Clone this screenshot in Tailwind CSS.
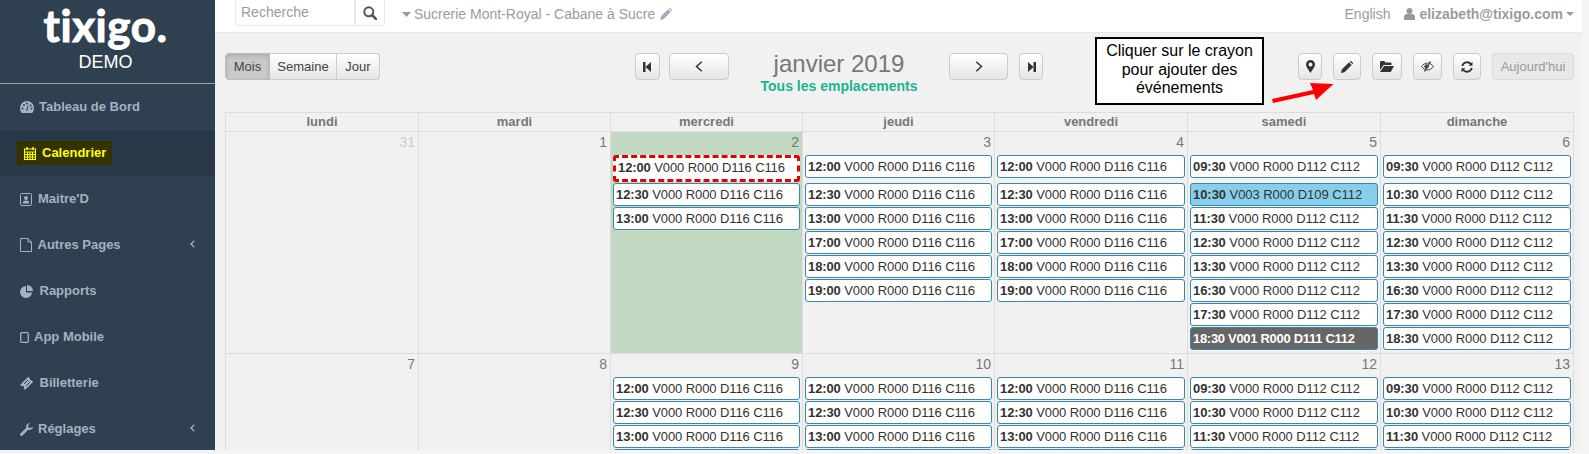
<!DOCTYPE html>
<html lang="fr">
<head>
    <meta charset="UTF-8">
    <title>Calendrier</title>
    <script src="https://cdn.jsdelivr.net/npm/@tailwindcss/browser@4"></script>
</head>
<body class="bg-[#f4f4f4] font-['Liberation_Sans',Arial,sans-serif] overflow-hidden">
<div class="relative w-[1589px] h-[454px] overflow-hidden">
<div class="flex h-[450px]">

    <!-- sidebar -->
    <aside class="w-[215px] shrink-0 bg-[#2f4050] text-[#a7b1c2] text-[13px] font-bold">
        <div class="h-[84px] border-b border-[#9da3a8] flex flex-col items-center pr-[4px]">
            <span class="font-['Lato',sans-serif] font-bold text-white text-[44px] leading-[48px] h-[48px] mt-[1px] mb-[2px] tracking-[0.5px] [-webkit-text-stroke:1px_white]">tixigo.</span>
            <span class="text-white text-[18px] leading-[20px] font-normal mt-[1px]">DEMO</span>
        </div>
        <a class="h-[46px] flex items-center pl-[20px]">
            <svg class="w-[14px] h-[12px] mr-[5px]" viewBox="0 0 14 12"><path fill="#a7b1c2" d="M7 0a7 7 0 0 0-7 7c0 2 .7 3.700 1.800 5h10.400A7 7 0 0 0 14 7a7 7 0 0 0-7-7z"/><g fill="#2f4050"><circle cx="2.500" cy="7.500" r="1"/><circle cx="4" cy="4" r="1"/><circle cx="7" cy="2.600" r="1"/><circle cx="10.500" cy="4.500" r="1"/><circle cx="11.500" cy="7.500" r="1"/><path d="M6 9.500l1.500-5 .8.200-1 5z"/></g></svg>
            <span>Tableau de Bord</span>
        </a>
        <a class="h-[46px] flex items-center bg-[#293846] pl-[17px]">
            <span class="h-[24px] w-[95px] bg-[#333300] text-[#ffff00] flex items-center pl-[7px]">
                <svg class="w-[12px] h-[13px] mr-[6px]" viewBox="0 0 12 13" fill="none" stroke="#ffff00"><rect x=".5" y="2" width="11" height="10.500"/><path d="M.5 5h11M.5 7.500h11M.5 10h11M3.500 5v7.500M6 5v7.500M8.500 5v7.500"/><path stroke-width="1.500" d="M3 0v3M9 0v3"/></svg>
                Calendrier
            </span>
        </a>
        <a class="h-[46px] flex items-center pl-[20px]">
            <svg class="w-[12px] h-[13px] mr-[6px]" viewBox="0 0 12 13"><rect x=".5" y=".5" width="11" height="12" rx="1" fill="none" stroke="#a7b1c2"/><circle cx="6" cy="5" r="2" fill="#a7b1c2"/><path fill="#a7b1c2" d="M2.500 10.500c0-2 1.500-3 3.500-3s3.500 1 3.500 3z"/></svg>
            <span>Maitre'D</span>
        </a>
        <a class="h-[46px] flex items-center pl-[20px] pr-[20px]">
            <svg class="w-[12px] h-[14px] mr-[5.500px]" viewBox="0 0 12 14" fill="none" stroke="#a7b1c2"><path d="M.5.500h7.500l3.500 3.500v9.500h-11zM8 .5v3.500h3.500"/></svg>
            <span>Autres Pages</span>
            <svg class="ml-auto w-[5px] h-[8px] -translate-y-[1px]" viewBox="0 0 5 8" fill="none" stroke="#a7b1c2" stroke-width="1.300"><path d="M4.300.7L1 4l3.300 3.300"/></svg>
        </a>
        <a class="h-[46px] flex items-center pl-[20px]">
            <svg class="w-[13px] h-[13px] mr-[6.500px]" viewBox="0 0 13 13"><path fill="#a7b1c2" d="M6 1a6 6 0 1 0 6 6.500H6z"/><path fill="#a7b1c2" d="M7 0v6h6a6 6 0 0 0-6-6z"/></svg>
            <span>Rapports</span>
        </a>
        <a class="h-[46px] flex items-center pl-[20px]">
            <svg class="w-[9px] h-[11px] mr-[5px]" viewBox="0 0 9 11" fill="none" stroke="#a7b1c2" stroke-width="1.300"><rect x=".7" y=".7" width="7.600" height="9.600" rx="1"/></svg>
            <span>App Mobile</span>
        </a>
        <a class="h-[46px] flex items-center pl-[20px]">
            <svg class="w-[13px] h-[13px] mr-[6.500px]" viewBox="0 0 13 13"><path fill="#a7b1c2" d="M0 8l8-8 2 1.200-.4 1 1.200 1.200 1-.4L13 5l-8 8-1.200-2 .4-1-1.200-1.200-1 .4z"/><path stroke="#2f4050" d="M4 7l4-4M6 9l4-4"/></svg>
            <span>Billetterie</span>
        </a>
        <a class="h-[46px] flex items-center pl-[20px] pr-[20px]">
            <svg class="w-[13px] h-[13px] mr-[5px]" viewBox="0 0 13 13"><path fill="#a7b1c2" d="M13 3.500a3.500 3.500 0 0 1-4.800 3.200L2.500 12.500a1.300 1.300 0 0 1-2-2l5.800-5.700A3.500 3.500 0 0 1 10 .2L8 2.500l.5 2 2 .5z"/></svg>
            <span>Réglages</span>
            <svg class="ml-auto w-[5px] h-[8px] -translate-y-[1px]" viewBox="0 0 5 8" fill="none" stroke="#a7b1c2" stroke-width="1.300"><path d="M4.300.7L1 4l3.300 3.300"/></svg>
        </a>
    </aside>

    <!-- main -->
    <main class="w-[1367px] shrink-0 bg-[#f1f1f1] flex flex-col overflow-hidden">
        <header class="h-[33px] shrink-0 bg-white border-b border-[#e7eaec] flex items-start pl-[20px] pr-[8px] text-[14px] text-[#999c9e]">
            <div class="flex h-[26px] border border-t-0 border-[#e7eaec] rounded-b-[2px]">
                <span class="w-[120px] pl-[5px] leading-[25px] border-r-2 border-[#e7eaec]">Recherche</span>
                <span class="w-[28px] flex items-center justify-center">
                    <svg class="w-[14px] h-[14px]" viewBox="0 0 14 14" fill="none" stroke="#555" stroke-width="2"><circle cx="5.800" cy="5.800" r="4.500"/><path stroke-width="2.500" stroke-linecap="round" d="M9 9l4 4"/></svg>
                </span>
            </div>
            <div class="flex items-center h-[28px] ml-[17px]">
                <svg class="w-[9px] h-[5px] mr-[3px]" viewBox="0 0 9 5"><path fill="#999" d="M0 0h9L4.500 5z"/></svg>
                <span>Sucrerie Mont-Royal - Cabane à Sucre</span>
                <svg class="w-[12px] h-[12px] ml-[5px]" viewBox="0 0 12 12"><path fill="#a3abc0" d="M0 12l.8-3.500L8 1.300 10.700 4 3.500 11.200zM8.800.5l.5-.5h.7L12 2v.7l-.5.5z"/></svg>
            </div>
            <div class="flex items-center h-[28px] ml-auto">
                <span>English</span>
                <svg class="w-[11px] h-[12px] ml-[14px] mr-[4px]" viewBox="0 0 11 12"><circle cx="5.500" cy="3" r="3" fill="#999"/><path fill="#999" d="M0 12V9c0-2 1.500-3 3-3h5c1.500 0 3 1 3 3v3z"/></svg>
                <span class="font-bold">elizabeth@tixigo.com</span>
                <svg class="w-[8px] h-[4px] ml-[3px]" viewBox="0 0 8 4"><path fill="#999" d="M0 0h8L4 4z"/></svg>
            </div>
        </header>

        <div class="h-[79px] shrink-0 pl-[10px] pr-[8px] pt-[20px] flex items-start text-[13px] text-[#444]">
            <div class="flex h-[27px] leading-[25px] text-center">
                <span class="w-[45px] bg-[#c9c9c9] border border-[#bbb] rounded-l-[4px] shadow-[inset_0_2px_4px_rgba(0,0,0,0.15)]">Mois</span>
                <span class="w-[67px] bg-linear-to-b from-white to-[#e6e6e6] border-y border-r border-[#ccc]">Semaine</span>
                <span class="w-[43px] bg-linear-to-b from-white to-[#e6e6e6] border-y border-r border-[#ccc] rounded-r-[4px]">Jour</span>
            </div>
            <span class="ml-[255px] w-[25px] h-[27px] flex items-center justify-center bg-linear-to-b from-white to-[#e6e6e6] border border-[#ccc] rounded-[4px]">
                <svg class="w-[9px] h-[10px]" viewBox="0 0 9 10"><path fill="#333" d="M0 0h2.500v10H0zM8 0v10L2.500 5z"/></svg>
            </span>
            <span class="ml-[9px] w-[60px] h-[27px] flex items-center justify-center bg-linear-to-b from-white to-[#e6e6e6] border border-[#ccc] rounded-[4px]">
                <svg class="w-[8px] h-[11px]" viewBox="0 0 8 11" fill="none" stroke="#333" stroke-width="1.500"><path d="M6.800.8L1.500 5.500l5.300 4.700"/></svg>
            </span>
            <div class="w-[220px] flex flex-col items-center -mt-[3px]">
                <span class="text-[24px] leading-[28px] text-[#777]">janvier 2019</span>
                <span class="text-[14px] leading-[16px] font-bold text-[#1ab394]">Tous les emplacements</span>
            </div>
            <span class="w-[59px] h-[27px] flex items-center justify-center bg-linear-to-b from-white to-[#e6e6e6] border border-[#ccc] rounded-[4px]">
                <svg class="w-[8px] h-[11px]" viewBox="0 0 8 11" fill="none" stroke="#333" stroke-width="1.500"><path d="M1.200.8l5.300 4.700-5.300 4.700"/></svg>
            </span>
            <span class="ml-[11px] w-[24px] h-[27px] flex items-center justify-center bg-linear-to-b from-white to-[#e6e6e6] border border-[#ccc] rounded-[4px]">
                <svg class="w-[9px] h-[10px]" viewBox="0 0 9 10"><path fill="#333" d="M9 0H6.500v10H9zM1 0v10l5.500-5z"/></svg>
            </span>
            <div class="ml-auto flex gap-[11px]">
                <span class="w-[24px] h-[27px] flex items-center justify-center bg-linear-to-b from-white to-[#e6e6e6] border border-[#ccc] rounded-[4px]">
                    <svg class="w-[9px] h-[13px]" viewBox="0 0 9 13"><path fill="#333" fill-rule="evenodd" d="M4.500 0A4.500 4.500 0 0 0 0 4.500C0 7 3 10.500 4.500 13 6 10.500 9 7 9 4.500A4.500 4.500 0 0 0 4.500 0zm0 2.500a2 2 0 1 1 0 4 2 2 0 0 1 0-4z"/></svg>
                </span>
                <span class="w-[28px] h-[27px] flex items-center justify-center bg-linear-to-b from-white to-[#e6e6e6] border border-[#ccc] rounded-[4px]">
                    <svg class="w-[12px] h-[12px]" viewBox="0 0 12 12"><path fill="#333" d="M0 12l.8-3.500L8 1.300 10.700 4 3.500 11.200zM8.800.5l.5-.5h.7L12 2v.7l-.5.5z"/></svg>
                </span>
                <span class="w-[30px] h-[27px] flex items-center justify-center bg-linear-to-b from-white to-[#e6e6e6] border border-[#ccc] rounded-[4px]">
                    <svg class="w-[14px] h-[11px]" viewBox="0 0 14 11"><path fill="#333" d="M0 1.500C0 .7.500 0 1.300 0h3l1 1.500h5.200c.7 0 1 .5 1 1V4H3.500L0 9zM4 5h10l-3.300 6H0z"/></svg>
                </span>
                <span class="w-[29px] h-[27px] flex items-center justify-center bg-linear-to-b from-white to-[#e6e6e6] border border-[#ccc] rounded-[4px]">
                    <svg class="w-[13px] h-[11px]" viewBox="0 0 13 11" fill="none" stroke="#444"><path d="M.5 5.500C2.500 3 4.500 2 6.500 2s4 1 6 3.500c-2 2.500-4 3.500-6 3.500S2.500 8 .5 5.500z"/><path stroke-width="1.400" d="M9.500.5l-6 10"/><circle cx="5.500" cy="5.500" r="1.800" fill="#444"/></svg>
                </span>
                <span class="w-[28px] h-[27px] flex items-center justify-center bg-linear-to-b from-white to-[#e6e6e6] border border-[#ccc] rounded-[4px]">
                    <svg class="w-[12px] h-[12px]" viewBox="0 0 12 12" fill="none" stroke="#333" stroke-width="1.800"><path d="M1.200 5a5 5 0 0 1 8.800-1.800M10.800 7a5 5 0 0 1-8.800 1.800"/><path fill="#333" stroke="none" d="M11.500.8v4H7.500zM.5 11.200v-4h4z"/></svg>
                </span>
                <span class="w-[82px] h-[27px] leading-[25px] text-center bg-[#e8e8e8] border border-[#d8d8d8] rounded-[4px] text-[#999]">Aujourd'hui</span>
            </div>
        </div>

        <!-- calendar -->
        <div class="ml-[10px] w-[1349px] border-r border-[#ddd]">
            <div id="head" class="grid grid-cols-[193px_192px_192px_192px_193px_193px_1fr] h-[20px] border-y border-[#ddd] text-[13px] font-bold text-[#777] text-center leading-[18px]">
                <div class="border-l border-[#ddd]">lundi</div>
                <div class="border-l border-[#ddd]">mardi</div>
                <div class="border-l border-[#ddd]">mercredi</div>
                <div class="border-l border-[#ddd]">jeudi</div>
                <div class="border-l border-[#ddd]">vendredi</div>
                <div class="border-l border-[#ddd]">samedi</div>
                <div class="border-l border-[#ddd]">dimanche</div>
            </div>
            <div id="week1" class="grid grid-cols-[193px_192px_192px_192px_193px_193px_1fr] h-[222px] border-b border-[#ddd]"></div>
            <div id="week2" class="grid grid-cols-[193px_192px_192px_192px_193px_193px_1fr] h-[120px]"></div>
        </div>
    </main>
</div>

<!-- annotation over the toolbar -->
<div class="absolute left-[1095px] top-[37px] w-[169px] h-[68px] bg-white border-2 border-black text-[16px] leading-[18.500px] text-black text-center pt-[3px]">
    Cliquer sur le crayon<br>pour ajouter des<br>événements
</div>
<svg class="absolute left-[1265px] top-[78px] w-[75px] h-[30px]" viewBox="0 0 75 30">
    <path fill="#f00" d="M68.500 6L45 5l3 7L7 21l1 4 41-9 2 6z"/>
</svg>
</div>

<script>
    // V/R/D/C counters of each slot
    const lateSlots = ['12:00', '12:30', '13:00', '17:00', '18:00', '19:00']
    const weekendSlots = ['09:30', '10:30', '11:30', '12:30', '13:30', '16:30', '17:30', '18:30']

    function slot(time, counters, kind, first) {
        const gap = first ? 'mb-[5px]' : 'mb-px'
        if (kind === 'dashed') {
            return `<div class="h-[27px] mb-px border-[3px] border-dashed border-[#e80000] rounded-[3px] bg-white pl-[2px] text-[13px] tracking-[-0.1px] leading-[20px] text-[#333] whitespace-nowrap"><b>${time}</b> ${counters}</div>`
        }
        if (kind === 'blue') {
            return `<div class="h-[23px] ${gap} border border-[#3a87ad] rounded-[3px] bg-[#87ceeb] pl-[2px] text-[13px] tracking-[-0.05px] leading-[21px] text-[#333] whitespace-nowrap"><b>${time}</b> ${counters}</div>`
        }
        if (kind === 'dark') {
            return `<div class="h-[23px] ${gap} border border-[#3a87ad] rounded-[3px] bg-[#666] pl-[2px] text-[13px] tracking-[-0.3px] leading-[21px] font-bold text-white whitespace-nowrap"><b>${time}</b> ${counters}</div>`
        }
        return `<div class="h-[23px] ${gap} border border-[#3a87ad] rounded-[3px] bg-white pl-[2px] text-[13px] tracking-[-0.1px] leading-[21px] text-[#333] whitespace-nowrap"><b>${time}</b> ${counters}</div>`
    }

    function day(num, slots, opts = {}) {
        const bg = opts.today ? 'bg-[#c1d8c1]' : ''
        const color = opts.muted ? 'text-[#ccc]' : 'text-[#777]'
        return `<div class="border-l border-[#ddd] pl-[2px] pr-[2px] overflow-hidden ${bg}">
            <div class="h-[23px] pr-[1px] text-right text-[14px] leading-[20px] ${color}">${num}</div>${slots}</div>`
    }

    const weekday = (times, firstGap) => times.map((t, i) => slot(t, 'V000 R000 D116 C116', '', firstGap && i === 0)).join('')
    const weekend = (firstGap) => weekendSlots.map((t, i) => slot(t, 'V000 R000 D112 C112', '', firstGap && i === 0)).join('')

    const saturday =
        slot('09:30', 'V000 R000 D112 C112', '', true) +
        slot('10:30', 'V003 R000 D109 C112', 'blue') +
        weekendSlots.slice(2, 7).map(t => slot(t, 'V000 R000 D112 C112')).join('') +
        slot('18:30', 'V001 R000 D111 C112', 'dark')

    const wednesday =
        slot('12:00', 'V000 R000 D116 C116', 'dashed') +
        slot('12:30', 'V000 R000 D116 C116') +
        slot('13:00', 'V000 R000 D116 C116')

    document.querySelector('#week1').innerHTML =
        day(31, '', { muted: true }) +
        day(1, '') +
        day(2, wednesday, { today: true }) +
        day(3, weekday(lateSlots, true)) +
        day(4, weekday(lateSlots, true)) +
        day(5, saturday) +
        day(6, weekend(true))

    document.querySelector('#week2').innerHTML =
        day(7, '') +
        day(8, '') +
        day(9, weekday(lateSlots)) +
        day(10, weekday(lateSlots)) +
        day(11, weekday(lateSlots)) +
        day(12, weekend()) +
        day(13, weekend())
</script>
</body>
</html>
